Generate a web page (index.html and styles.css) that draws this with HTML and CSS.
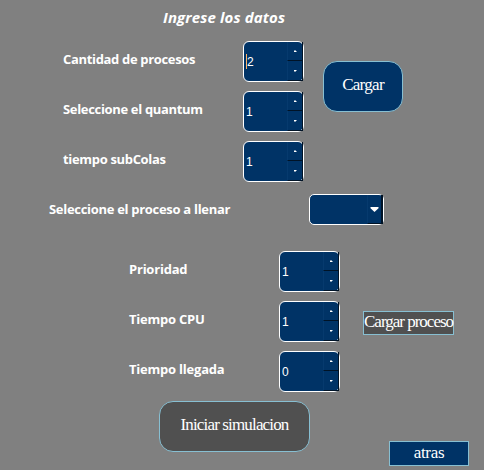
FILE: index.html
```html
<!DOCTYPE html>
<html lang="es">
<head>
<meta charset="utf-8">
<title>Ingrese los datos</title>
<link rel="stylesheet" href="styles.css">
</head>
<body>
<main class="window">
  <h1 class="title">Ingrese los datos</h1>
  <section class="group general">
    <div class="fields">
      <div class="row"><span class="label l-cantidad">Cantidad de procesos</span><div class="spin"><span class="value focused">2</span><div class="steps"><i class="step up"></i><i class="step down"></i></div></div></div>
      <div class="row"><span class="label l-quantum">Seleccione el quantum</span><div class="spin"><span class="value">1</span><div class="steps"><i class="step up"></i><i class="step down"></i></div></div></div>
      <div class="row"><span class="label l-sub">tiempo subColas</span><div class="spin"><span class="value">1</span><div class="steps"><i class="step up"></i><i class="step down"></i></div></div></div>
    </div>
    <button class="btn load">Cargar</button>
  </section>
  <section class="select-row">
    <span class="label l-select">Seleccione el proceso a llenar</span>
    <div class="combo"><div class="drop"><svg width="9" height="5" viewBox="0 0 9 5"><path d="M0.5 0h8v1.2L4.5 5 .5 1.2z" fill="#fff"/></svg></div></div>
  </section>
  <section class="group process">
    <div class="fields">
      <div class="row"><span class="label">Prioridad</span><div class="spin"><span class="value">1</span><div class="steps"><i class="step up"></i><i class="step down"></i></div></div></div>
      <div class="row"><span class="label">Tiempo CPU</span><div class="spin"><span class="value">1</span><div class="steps"><i class="step up"></i><i class="step down"></i></div></div></div>
      <div class="row"><span class="label">Tiempo llegada</span><div class="spin"><span class="value">0</span><div class="steps"><i class="step up"></i><i class="step down"></i></div></div></div>
    </div>
    <button class="btn load-process">Cargar proceso</button>
  </section>
  <footer class="actions">
    <button class="btn start">Iniciar simulacion</button>
    <button class="btn back">atras</button>
  </footer>
</main>
</body>
</html>
```
FILE: styles.css
```css
* { box-sizing: border-box; }
body { margin: 0; background: #808080; }
.window {
  width: 484px;
  height: 470px;
  overflow: hidden;
  background: #808080;
  color: #fff;
  font-family: "Open Sans", "Noto Sans", sans-serif;
}
.title {
  margin: 0;
  height: 41px;
  padding-left: 163px;
  font-size: 15px;
  line-height: 35px;
  font-weight: 700;
  font-style: italic;
  letter-spacing: 0.12px;
  white-space: nowrap;
}
.group { display: flex; align-items: flex-start; }
.general { padding-left: 63px; height: 153px; }
.process { padding-left: 129px; height: 150px; }
.fields { display: flex; flex-direction: column; gap: 9px; }
.row { display: flex; }
.label {
  width: 180px;
  font-size: 13px;
  line-height: 36px;
  font-weight: 700;
  letter-spacing: -0.33px;
  white-space: nowrap;
}
.process .label { width: 150px; letter-spacing: -0.22px; }
.spin {
  display: flex;
  justify-content: space-between;
  width: 61px;
  height: 41px;
  border: 1px solid #fff;
  border-radius: 6px;
  background: #003366;
}
.value {
  display: block;
  padding-left: 2px;
  font-family: "Liberation Sans", sans-serif;
  font-size: 12px;
  line-height: 41px;
}
.focused {
  height: 15px;
  margin: 12px 0 0 2px;
  padding: 0;
  border-left: 1px solid #ffb366;
  line-height: 17px;
}
.steps { width: 16px; height: 39px; }
.step {
  display: flex;
  align-items: center;
  justify-content: center;
  height: 19px;
  border-left: 1px solid #063a6e;
  border-right: 1px solid #001326;
  border-bottom: 1px solid #001326;
}
.down { height: 20px; padding-top: 1px; }
.step::before {
  content: "";
  width: 3px;
  height: 2px;
  background: #fff;
}
.up::before { clip-path: polygon(1px 0, 2px 0, 2px 1px, 3px 1px, 3px 2px, 0 2px, 0 1px, 1px 1px); }
.down::before { clip-path: polygon(0 0, 3px 0, 3px 1px, 2px 1px, 2px 2px, 1px 2px, 1px 1px, 0 1px); }
.btn {
  padding: 0;
  border: 1px solid #87bfd2;
  background: #003366;
  color: #fff;
  font-family: "Liberation Serif", serif;
  font-size: 17px;
  white-space: nowrap;
}
.load {
  width: 80px;
  height: 51px;
  margin: 20px 0 0 19px;
  padding-bottom: 3px;
  border-radius: 14px;
  letter-spacing: -0.7px;
}
.select-row { display: flex; height: 57px; padding-left: 49px; }
.select-row .label { width: 260px; line-height: 30px; letter-spacing: -0.3px; }
.combo {
  display: flex;
  justify-content: flex-end;
  width: 75px;
  height: 31px;
  border: 1px solid #fff;
  border-radius: 5px;
  background: #003366;
}
.drop {
  display: flex;
  align-items: center;
  justify-content: center;
  width: 16px;
  border-left: 1px solid #063a6e;
  border-right: 2px solid #001326;
  border-bottom: 1px solid #001326;
}
.load-process {
  width: 91px;
  height: 24px;
  margin: 60px 0 0 23px;
  padding-bottom: 3px;
  background: #505050;
  line-height: 18px;
  letter-spacing: -1px;
}
.actions { display: flex; padding-left: 159px; }
.start {
  width: 151px;
  height: 51px;
  padding-bottom: 3px;
  border-radius: 14px;
  background: #505050;
  letter-spacing: -0.85px;
}
.back {
  width: 80px;
  height: 25px;
  margin: 40px 0 0 79px;
  padding-bottom: 2px;
  line-height: 20px;
  letter-spacing: -0.3px;
}
```
